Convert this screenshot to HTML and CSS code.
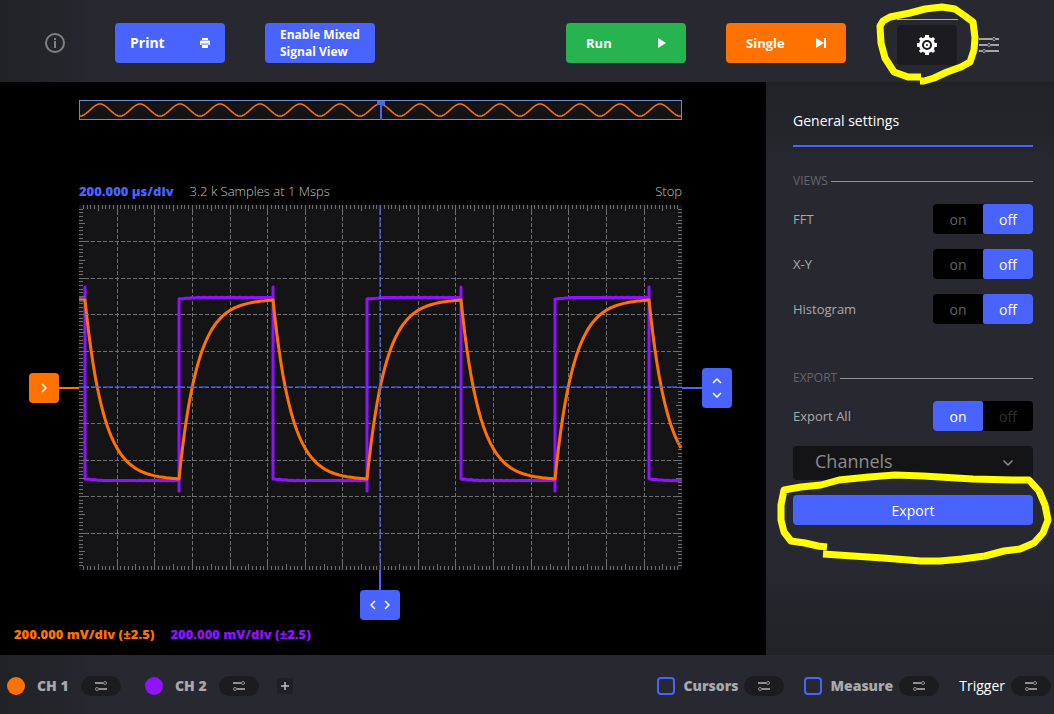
FILE: index.html
```html
<!DOCTYPE html>
<html lang="en">
<head>
<meta charset="utf-8">
<title>Oscilloscope</title>
<link rel="stylesheet" href="styles.css">
</head>
<body>
<svg class="defs" aria-hidden="true">
  <symbol id="tune" viewBox="0 0 12 10">
    <path d="M0 2h8M4 8h8" fill="none" stroke="currentColor" stroke-width="2"/>
    <circle cx="10" cy="2" r="1.5" fill="none" stroke="currentColor"/>
    <circle cx="2" cy="8" r="1.5" fill="none" stroke="currentColor"/>
  </symbol>
</svg>

<header class="topbar">
  <button class="icon-btn" aria-label="Info">
    <svg width="20" height="20" viewBox="0 0 20 20"><circle cx="10" cy="10" r="9" fill="none" stroke="currentColor" stroke-width="2"/><path d="M10 8v7M10 5v2" stroke="currentColor" stroke-width="2"/></svg>
  </button>
  <button class="btn btn-print">Print
    <svg width="10" height="10" viewBox="0 0 10 10"><path d="M2 0h6v2H2zM1 2.500h8a1 1 0 0 1 1 1V7H8.500V5.500h-7V7H0V3.500a1 1 0 0 1 1-1zM2 6.500h6V10H2z" fill="currentColor"/></svg>
  </button>
  <button class="btn btn-mixed">Enable Mixed Signal View</button>
  <div class="topbar-right">
    <button class="btn btn-action btn-run">Run
      <svg width="10" height="10" viewBox="0 0 10 10"><path d="M2 0l8 5-8 5z" fill="currentColor"/></svg>
    </button>
    <button class="btn btn-action btn-single">Single
      <svg width="10" height="10" viewBox="0 0 10 10"><path d="M0 0l8 5-8 5zM8 0h2v10H8z" fill="currentColor"/></svg>
    </button>
    <div class="gear-tab">
      <button class="btn-gear" aria-label="General settings">
        <svg width="20" height="20" viewBox="0 0 20 20">
          <path d="M8 0h4v4H8zM8 16h4v4H8zM0 8h4v4H0zM16 8h4v4h-4zM1.900 4l2.100-2.100L7 4.500 4.500 7zM16 1.900L18.100 4 15.500 7 13 4.500zM18.100 16L16 18.100 13 15.500 15.500 13zM4 18.100L1.900 16 4.500 13 7 15.500z" fill="currentColor"/>
          <circle cx="10" cy="10" r="6.500" fill="none" stroke="currentColor" stroke-width="3"/>
          <circle cx="10" cy="10" r="2" fill="none" stroke="currentColor" stroke-width="2"/>
        </svg>
      </button>
      <svg class="mark mark-gear" width="104" height="88" viewBox="0 0 104 88" aria-hidden="true"><path d="M51 77L38 77 24 72 15 58 11 43 10 26 13 21 20 17 40 13 55 9 72 7 85 9 95 16 103 22 105 38 104 50 100 62 91 67 77 72 64 78 54 81 50 81"/></svg>
    </div>
    <button class="icon-btn sliders" aria-label="Menu">
      <svg width="20" height="16" viewBox="0 0 20 16"><path d="M0 2h13M17 2h3M0 8h8M12 8h8M0 14h3M7 14h13" stroke="currentColor" stroke-width="2"/><g fill="none" stroke="currentColor"><circle cx="15" cy="2" r="1.500"/><circle cx="10" cy="8" r="1.500"/><circle cx="5" cy="14" r="1.500"/></g></svg>
    </button>
  </div>
</header>

<main class="workspace">
  <section class="scope">
    <svg class="overview" viewBox="0 0 603 20" preserveAspectRatio="none" aria-label="Buffer overview">
      <rect x="0" y="0" width="603" height="20" fill="#141416"/>
      <path id="overview-wave" fill="none" stroke="#ff7200" stroke-width="1.500"/>
      <rect x="0.500" y="0.500" width="602" height="19" fill="none" stroke="#6a8fc8"/>
      <path d="M298 1h8v4h-3v15h-2V5h-3z" fill="#4963ff"/>
    </svg>
    <div class="status">
      <span class="timebase">200.000 µs/div</span>
      <span>3.2 k Samples at 1 Msps</span>
      <span class="run-state">Stop</span>
    </div>
    <div class="handle-left">
      <button class="handle handle-ch" aria-label="Channel offset"><svg width="6" height="10" viewBox="0 0 6 10"><path d="M1 1l4 4-4 4"/></svg></button>
    </div>
    <svg class="plot" viewBox="0 0 603 365" preserveAspectRatio="none" aria-label="Waveforms">
      <rect width="603" height="365" fill="#141416"/>
      <path id="grid" class="grid-dashed"/>
      <path id="trace-two" class="trace trace-two"/>
      <path id="trace-one" class="trace trace-one"/>
      <path id="ticks" class="ticks"/>
      <path d="M301 0V365M0 182H603" class="center-line"/>
    </svg>
    <div class="handle-right">
      <button class="handle handle-level" aria-label="Trigger level"><svg width="10" height="20" viewBox="0 0 10 20"><path d="M1 5l4-4 4 4M1 15l4 4 4-4"/></svg></button>
    </div>
    <div class="handle-bottom">
      <button class="handle handle-delay" aria-label="Trigger delay"><svg width="20" height="10" viewBox="0 0 20 10"><path d="M5 1L1 5l4 4M15 1l4 4-4 4"/></svg></button>
    </div>
    <div class="scales"><span class="scale-one">200.000 mV/div (±2.5)</span><span class="scale-two">200.000 mV/div (±2.5)</span></div>
  </section>

  <aside class="settings">
    <h1 class="settings-title">General settings</h1>
    <h2 class="section-title">VIEWS</h2>
    <div class="rows">
      <div class="row" role="radiogroup" aria-label="FFT"><span>FFT</span>
        <div class="toggle"><label><input type="radio" name="fft">on</label><label><input type="radio" name="fft" checked>off</label></div></div>
      <div class="row" role="radiogroup" aria-label="X-Y"><span>X-Y</span>
        <div class="toggle"><label><input type="radio" name="xy">on</label><label><input type="radio" name="xy" checked>off</label></div></div>
      <div class="row" role="radiogroup" aria-label="Histogram"><span>Histogram</span>
        <div class="toggle"><label><input type="radio" name="hist">on</label><label><input type="radio" name="hist" checked>off</label></div></div>
    </div>
    <h2 class="section-title section-export">EXPORT</h2>
    <div class="rows">
      <div class="row" role="radiogroup" aria-label="Export All"><span>Export All</span>
        <div class="toggle toggle-dim"><label><input type="radio" name="all" checked>on</label><label><input type="radio" name="all">off</label></div></div>
      <div class="select-wrap">
        <select class="select" aria-label="Export channels"><option>Channels</option></select>
        <svg class="chevron" width="10" height="6" viewBox="0 0 10 6" aria-hidden="true"><path d="M0.500 0.500L5 5l4.500-4.500" fill="none" stroke="currentColor" stroke-width="1.500"/></svg>
      </div>
      <div class="export-wrap">
        <button class="btn-export">Export</button>
        <svg class="mark mark-export" width="278" height="100" viewBox="0 0 278 100" aria-hidden="true"><path d="M54 80L45 79 32 76 18 74 11 65 8 53 8 38 11 23 28 20 48 18 66 13 96 10 122 8 150 9 200 12 240 13 256 13 266 24 272 38 275 53 270 66 261 76 247 82 231 84 212 89 189 92 167 94 148 94 110 91 80 89 50 87"/></svg>
      </div>
    </div>
  </aside>
</main>

<footer class="bottombar">
  <div class="channel"><i class="dot dot-one"></i><span class="name">CH 1</span><button class="pill" aria-label="CH 1 settings"><svg width="12" height="10"><use href="#tune"/></svg></button></div>
  <div class="channel"><i class="dot dot-two"></i><span class="name">CH 2</span><button class="pill" aria-label="CH 2 settings"><svg width="12" height="10"><use href="#tune"/></svg></button></div>
  <button class="add" aria-label="Add channel"><svg width="8" height="8" viewBox="0 0 8 8"><path d="M4 0v8M0 4h8" stroke="currentColor" stroke-width="1.500"/></svg></button>
  <div class="tools">
    <div class="tool"><label class="name"><input type="checkbox" class="check">Cursors</label><button class="pill" aria-label="Cursor settings"><svg width="12" height="10"><use href="#tune"/></svg></button></div>
    <div class="tool"><label class="name"><input type="checkbox" class="check">Measure</label><button class="pill" aria-label="Measure settings"><svg width="12" height="10"><use href="#tune"/></svg></button></div>
    <div class="tool tool-trigger"><span>Trigger</span><button class="pill" aria-label="Trigger settings"><svg width="12" height="10"><use href="#tune"/></svg></button></div>
  </div>
</footer>
<script src="scope.js"></script>
</body>
</html>
```
FILE: styles.css
```css
* { box-sizing: border-box; }

body {
  margin: 0;
  min-height: 100vh;
  display: grid;
  grid-template-rows: auto 1fr auto;
  background: #000;
  color: #a9a9ab;
  font: 13px/18px "Open Sans", "Noto Sans", sans-serif;
}

button, select, input { font: inherit; color: inherit; margin: 0; }
button { border: 0; padding: 0; background: none; cursor: pointer; }
svg { display: block; flex: none; }
.defs { position: absolute; width: 0; height: 0; }

.topbar {
  display: flex;
  align-items: center;
  min-height: 82px;
  padding: 4px 55px 0 45px;
  background: linear-gradient(90deg, #212226, #272830 100px);
}
.icon-btn { color: #808083; }
.btn {
  height: 40px;
  border-radius: 4px;
  background: #4963ff;
  color: #fff;
  font-weight: 700;
  text-align: left;
}
.btn-print, .btn-action { display: flex; align-items: center; justify-content: space-between; }
.btn-print { width: 110px; margin: 0 40px 0 50px; padding: 0 15px; font-size: 14px; }
.btn-mixed { width: 110px; padding: 0 10px 0 15px; font-size: 12px; line-height: 17px; }
.btn-action { width: 120px; padding: 0 20px; }
.btn-run { background: #27b34f; }
.btn-single { background: #ff7200; }
.topbar-right { display: flex; align-items: center; gap: 40px; margin-left: auto; }
.gear-tab { position: relative; margin: 0 -18px 0 11px; padding-top: 4px; }
.gear-tab::before {
  content: "";
  position: absolute;
  left: 0;
  right: -1px;
  top: -2px;
  height: 1px;
  background: #b0b0b0;
}
.btn-gear {
  display: grid;
  place-items: center;
  width: 60px;
  height: 40px;
  border-radius: 4px;
  background: #1c1c20;
  color: #fff;
}
.sliders { color: #a5a5a8; padding-top: 4px; }

.mark {
  position: absolute;
  overflow: visible;
  pointer-events: none;
  fill: none;
  stroke: #ff0;
  stroke-width: 7px;
  stroke-linejoin: round;
}
.mark-gear { left: -27px; top: -21px; }
.mark-export { left: -20px; top: -28px; }

.workspace { display: grid; grid-template-columns: 1fr 288px; }

.scope {
  display: grid;
  grid-template-columns: 79px 1fr 84px;
  grid-template-rows: 20px 85px 1fr 50px 35px;
  padding-top: 18px;
}
.overview { grid-area: 1 / 2; width: 100%; height: 20px; }
.status {
  grid-area: 2 / 2;
  display: flex;
  align-items: flex-end;
  gap: 16px;
  padding-bottom: 5px;
  color: #c4c4c6;
  font-weight: 300;
}
.timebase { color: #4963ff; font-weight: 800; }
.run-state { margin-left: auto; }
.plot { grid-area: 3 / 2; width: 100%; height: 100%; }
.handle-left, .handle-right { display: flex; align-items: center; }
.handle-left { grid-area: 3 / 1; justify-content: flex-end; }
.handle-left::after { content: ""; width: 20px; height: 2px; background: #ff7200; }
.handle-right { grid-area: 3 / 3; }
.handle-right::before { content: ""; width: 20px; height: 2px; background: #4963ff; }
.handle-bottom { grid-area: 4 / 2; display: flex; flex-direction: column; align-items: center; padding-right: 2px; }
.handle-bottom::before { content: ""; width: 2px; height: 20px; background: #4963ff; }
.handle { display: grid; place-items: center; border-radius: 4px; background: #4963ff; }
.handle path { fill: none; stroke: #fff; stroke-width: 1.5px; }
.handle-ch { width: 30px; height: 30px; background: #ff7200; }
.handle-level { width: 30px; height: 40px; }
.handle-delay { width: 40px; height: 30px; }
.scales {
  grid-area: 5 / 1 / 6 / 4;
  display: flex;
  gap: 16px;
  padding: 5px 14px 0;
  font-size: 13px;
  font-weight: 800;
}
.scale-one { color: #ff7200; }
.scale-two { color: #9013fe; }

.grid-dashed { fill: none; stroke: #6e6e70; stroke-dasharray: 4 2; shape-rendering: crispEdges; }
.ticks { fill: none; stroke: #6e6e70; shape-rendering: crispEdges; }
.center-line { stroke: #4963ff; stroke-opacity: 0.75; stroke-width: 1.5px; stroke-dasharray: 10 2; }
.trace { fill: none; stroke-width: 3px; stroke-linejoin: round; }
.trace-one { stroke: #ff7200; }
.trace-two { stroke: #9013fe; }

.settings {
  padding: 29px 21px 20px 27px;
  background: linear-gradient(#212226, #272830 90px, #272830 calc(100% - 90px), #212226);
}
.settings-title {
  margin: 0 0 25px;
  padding-bottom: 14px;
  border-bottom: 2px solid #4963ff;
  color: #fff;
  font-size: 14px;
  font-weight: 400;
  line-height: 20px;
}
.section-title {
  display: flex;
  align-items: center;
  gap: 3px;
  margin: 0 0 14px;
  color: #656569;
  font-size: 12px;
  font-weight: 400;
}
.section-title::after { content: ""; flex: 1; height: 1px; background: #929295; }
.section-export { margin-top: 45px; }
.rows { display: grid; gap: 15px; }
.row { display: flex; align-items: center; justify-content: space-between; }
.toggle {
  display: flex;
  width: 100px;
  height: 30px;
  overflow: hidden;
  border-radius: 4px;
  background: #000;
  color: #606063;
  font-size: 14px;
}
.toggle label { flex: 1; display: grid; place-items: center; padding-top: 2px; cursor: pointer; }
.toggle label:has(:checked) { background: #4963ff; color: #fff; border-radius: 2px; }
.toggle input { position: absolute; opacity: 0; pointer-events: none; }
.toggle-dim { color: #303032; }
.select-wrap, .export-wrap { position: relative; }
.select {
  appearance: none;
  display: block;
  width: 100%;
  height: 34px;
  padding: 0 22px 4px;
  border: 0;
  border-radius: 4px;
  background: #141416;
  color: #8c8c8e;
  font-size: 18px;
}
.chevron { position: absolute; right: 20px; top: 14px; color: #8c8c8e; pointer-events: none; }
.btn-export {
  display: block;
  width: 100%;
  height: 30px;
  padding-top: 2px;
  border-radius: 4px;
  background: #4963ff;
  color: #fff;
  font-size: 14px;
}

.bottombar {
  display: flex;
  align-items: center;
  min-height: 59px;
  padding: 3px 3px 0 7px;
  background: linear-gradient(90deg, #212226, #272830 100px);
}
.channel { display: flex; align-items: center; width: 138px; }
.dot { width: 18px; height: 18px; border-radius: 50%; }
.dot-one { background: #ff7200; }
.dot-two { background: #9013fe; }
.name { font-size: 14px; font-weight: 800; }
.channel .name { margin-left: 12px; width: 44px; }
.pill {
  display: grid;
  place-items: center;
  width: 40px;
  height: 20px;
  border-radius: 10px;
  background: #1c1c20;
  color: #8f8f92;
}
.add {
  display: grid;
  place-items: center;
  width: 16px;
  height: 16px;
  margin-left: -6px;
  border-radius: 2px;
  background: #1d2026;
  color: #c0c0c2;
}
.tools { display: flex; gap: 20px; margin-left: auto; }
.tool { display: flex; align-items: center; gap: 6px; }
.tool .name { display: flex; align-items: center; gap: 8px; }
.check { appearance: none; width: 18px; height: 18px; border: 2px solid #4963ff; border-radius: 4px; }
.tool-trigger { color: #fff; font-size: 14px; }
```
FILE: scope.js
```js
const W = 603, H = 365, DX = 37.64, DY = 36.4;
const set = (id, d) => document.getElementById(id).setAttribute('d', d);

// Graticule: 16 x 10 divisions with ten minor ticks in each
let grid = '', ticks = '';
for (let i = 1; i < 16; i++) grid += `M${Math.round(i * DX) + 0.5} 0V${H}`;
for (let i = 1; i < 10; i++) grid += `M0 ${Math.round(i * DY) + 0.5}H${W}`;
const tickLength = i => (i % 10 === 0 ? 9 : i % 5 === 0 ? 6 : 4);
for (let i = 1; i < 160; i++) {
  const x = Math.round(i * DX / 10) + 0.5, l = tickLength(i);
  ticks += `M${x} 0v${l}M${x} ${H}v${-l}`;
}
for (let i = 1; i < 100; i++) {
  const y = Math.round(i * DY / 10) + 0.5, l = tickLength(i);
  ticks += `M0 ${y}h${l}M${W} ${y}h${-l}`;
}
set('grid', grid);
set('ticks', ticks);

// Channel 1: capacitor charge and discharge; channel 2: square drive signal
const HALF = 94, TAU = 18.5, TOP = 94, BOTTOM = 275;
let one = `M0 95H6`, two = `M0 93H6`;
for (let n = 0, x = 6; x < W; n++, x += HALF) {
  const falling = n % 2 === 0;
  const from = falling ? TOP + 1 : BOTTOM - 1, to = falling ? BOTTOM : TOP;
  for (let t = 0; t <= HALF && x + t <= W; t += 2) {
    one += `L${x + t} ${(to + (from - to) * Math.exp(-t / TAU)).toFixed(1)}`;
  }
  two += falling ? `V82V274` : `V286V94`;
  for (let t = 1; t <= HALF && x + t <= W; t += 3) {
    const noise = Math.sin(t * 7.3 + n * 5) * 0.3;
    const drift = Math.min(t / 12, 1.5);
    two += `L${x + t} ${((falling ? 274 + drift : 94 - drift) + noise).toFixed(1)}`;
  }
  two += `H${Math.min(x + HALF, W)}`;
}
set('trace-one', one);
set('trace-two', two);

let wave = 'M1 16';
for (let x = 2; x < W; x++) wave += `L${x} ${(10 - 6 * Math.cos((x - 21) * Math.PI / 20)).toFixed(1)}`;
set('overview-wave', wave);
```
